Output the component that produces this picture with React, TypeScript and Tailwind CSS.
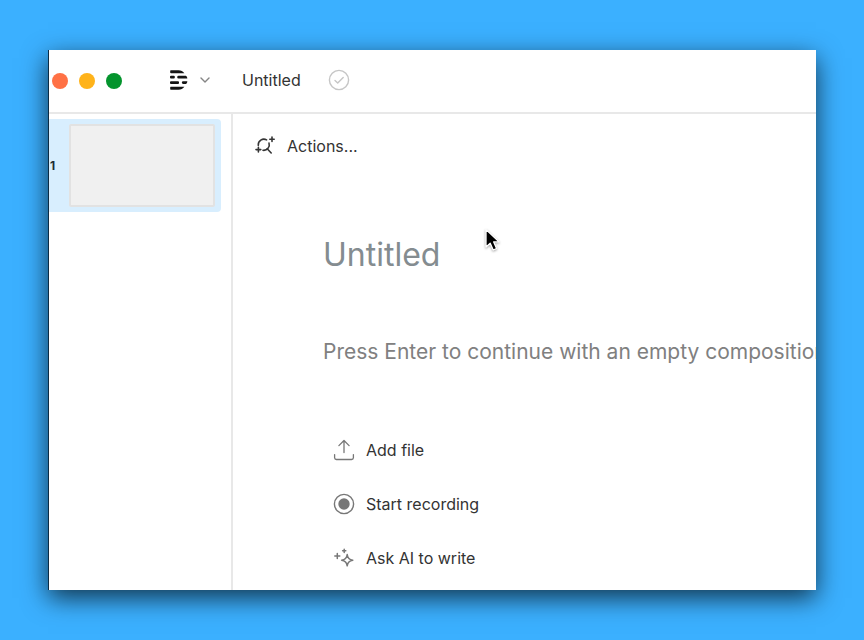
import type { ReactNode } from "react";

interface StartOption {
  label: string;
  icon: ReactNode;
}

function DescriptLogo() {
  return (
    <svg width="18" height="20" viewBox="0 0 18 20" fill="#151515" aria-hidden="true">
      <path d="M1 0.3H8.5C11 0.3 13 1.4 14.4 3.2H1A1 1 0 0 1 0.2 2.7V1A0.6 0.6 0 0 1 1 0.3Z" />
      <rect x="0" y="5.8" width="4.8" height="2.8" rx="1" />
      <path d="M8.6 5.8H15.8C16.9 6.6 17.3 7.5 17.3 8.6H8.6A1.4 1.4 0 0 1 8.6 5.8Z" />
      <rect x="0" y="11.2" width="9" height="2.8" rx="1" />
      <path d="M13.2 11.2H17.3C17.3 12.3 16.9 13.2 15.9 14H13.2A1.4 1.4 0 0 1 13.2 11.2Z" />
      <path d="M1 16.8H14.4C12.9 18.6 11 19.7 8.5 19.7H1A0.6 0.6 0 0 1 0.2 19V17.3A0.6 0.6 0 0 1 1 16.8Z" />
    </svg>
  );
}

function ChevronIcon() {
  return (
    <svg width="10" height="6" viewBox="0 0 10 6" fill="none" stroke="#858585" strokeWidth="1.4" strokeLinecap="round" strokeLinejoin="round" aria-hidden="true">
      <path d="M1 0.9L5 4.9L9 0.9" />
    </svg>
  );
}

function SavedIcon() {
  return (
    <svg width="22" height="22" viewBox="0 0 22 22" fill="none" stroke="#c6c6c6" strokeWidth="1.4" strokeLinecap="round" strokeLinejoin="round" role="img" aria-label="Saved">
      <circle cx="11" cy="11" r="9.6" />
      <path d="M7 11.4L9.7 14L15.2 8.4" />
    </svg>
  );
}

function ActionsIcon() {
  return (
    <svg width="20" height="20" viewBox="0 0 20 20" fill="none" stroke="#353535" strokeWidth="1.6" strokeLinecap="round" aria-hidden="true">
      <path d="M3.3 9.4A5.6 5.6 0 0 1 11.6 3.9" />
      <path d="M14 7A5.6 5.6 0 0 1 8 14.3" />
      <path d="M12.2 12.8L16.2 17" />
      <path d="M17 1V5.4M14.8 3.2H19.2" />
      <path d="M3.4 11.2V16M1 13.6H5.8" />
    </svg>
  );
}

function UploadIcon() {
  return (
    <svg width="22" height="22" viewBox="0 0 22 22" fill="none" stroke="#777777" strokeWidth="1.3" strokeLinecap="round" strokeLinejoin="round" aria-hidden="true">
      <path d="M11 13.5V1.6M5.9 6.6L11 1.5L16.1 6.6" />
      <path d="M1.6 15.6V18.8A1.8 1.8 0 0 0 3.4 20.5H18.6A1.8 1.8 0 0 0 20.4 18.8V15.6" />
    </svg>
  );
}

function RecordIcon() {
  return (
    <svg width="22" height="22" viewBox="0 0 22 22" fill="none" aria-hidden="true">
      <circle cx="11" cy="11" r="9.6" stroke="#777777" strokeWidth="1.4" />
      <circle cx="11" cy="11" r="5.7" fill="#777777" />
    </svg>
  );
}

function SparkleIcon() {
  return (
    <svg width="22" height="22" viewBox="0 0 22 22" fill="none" stroke="#777777" strokeWidth="1.5" strokeLinecap="round" strokeLinejoin="round" aria-hidden="true">
      <path d="M14.2 7.6Q14.8 12.6 19.8 13.2Q14.8 13.8 14.2 18.8Q13.6 13.8 8.6 13.2Q13.6 12.6 14.2 7.6Z" />
      <path d="M4.3 6.6V11.6M1.8 9.1H6.8" />
      <path d="M11.2 2.2V5.4M9.6 3.8H12.8" />
    </svg>
  );
}

const startOptions: StartOption[] = [
  { label: "Add file", icon: <UploadIcon /> },
  { label: "Start recording", icon: <RecordIcon /> },
  { label: "Ask AI to write", icon: <SparkleIcon /> },
];

function TitleBar() {
  return (
    <header className="flex h-16 shrink-0 items-center border-b-2 border-[#e8e8e8] pl-[3px]">
      <div className="flex gap-[11px]">
        <button aria-label="Close" className="size-4 rounded-full bg-[#ff7145]" />
        <button aria-label="Minimize" className="size-4 rounded-full bg-[#ffb31a]" />
        <button aria-label="Zoom" className="size-4 rounded-full bg-[#04942d]" />
      </div>
      <button aria-label="Menu" className="ml-12 flex items-center gap-3 pb-0.5">
        <DescriptLogo />
        <ChevronIcon />
      </button>
      <button className="ml-8 pb-0.5 text-base leading-6 text-[#333333]">Untitled</button>
      <span className="ml-[27px] pb-0.5">
        <SavedIcon />
      </span>
    </header>
  );
}

function SceneList() {
  return (
    <aside className="w-[184px] shrink-0 border-r-2 border-[#e8e8e8] pt-[5px]">
      <button aria-label="Scene 1" className="flex w-[172px] items-center rounded-r-sm bg-[#d8eefe] py-[5px]">
        <span className="w-5 pl-px text-left text-xs leading-4 font-bold text-[#1c2b36]">1</span>
        <span className="h-[83px] w-[146px] rounded-xs border-2 border-[#e2e2e2] bg-[#f0f0f0]" />
      </button>
    </aside>
  );
}

export default function App() {
  return (
    <div className="flex min-h-screen bg-[#3bb0ff] px-12 py-[50px] font-['Inter',sans-serif]">
      <div className="flex min-w-0 flex-1 flex-col border-l border-[#0c2c44] bg-white shadow-[0_8px_24px_rgba(0,0,0,0.7)]">
        <TitleBar />
        <div className="flex flex-1">
          <SceneList />
          <main className="relative min-w-0 flex-1 overflow-hidden pt-5">
            <button className="ml-[22px] flex items-center gap-3 text-base leading-6 text-[#333333]">
              <ActionsIcon />
              Actions...
            </button>
            <div className="pt-[77px] pl-[90px]">
              <h1 className="text-[32px] leading-10 font-normal text-[#848c90]">Untitled</h1>
              <p className="mt-[61px] text-[21px] leading-8 whitespace-nowrap text-[#808080]">
                Press Enter to continue with an empty composition
              </p>
              <ul className="mt-[70px] flex flex-col gap-[30px] pl-[10px]">
                {startOptions.map((option) => (
                  <li key={option.label}>
                    <button className="flex items-center gap-[11px] text-base leading-6 text-[#333333]">
                      {option.icon}
                      {option.label}
                    </button>
                  </li>
                ))}
              </ul>
            </div>
            {/* Mouse pointer */}
            <svg className="absolute top-[114px] left-[251px] drop-shadow-[0_1px_1px_rgba(0,0,0,0.35)]" width="18" height="24" viewBox="0 0 18 24" aria-hidden="true">
              <path d="M2 1.5V19L6.2 15.2L9.2 22L12.6 20.5L9.7 13.9H15Z" fill="#000000" stroke="#ffffff" strokeWidth="1.3" strokeLinejoin="round" />
            </svg>
          </main>
        </div>
      </div>
    </div>
  );
}
